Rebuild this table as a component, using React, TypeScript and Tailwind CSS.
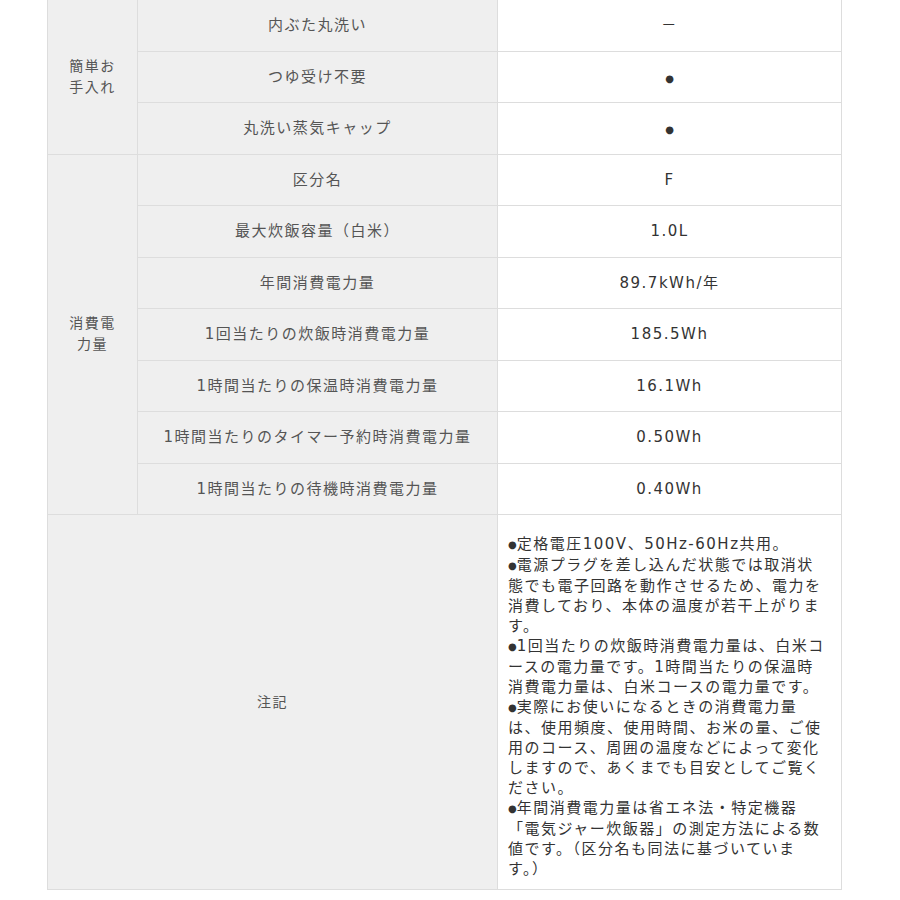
const rows: { group?: { label: string[]; span: number }; name: string; value: string }[] = [
  { group: { label: ["簡単お", "手入れ"], span: 3 }, name: "内ぶた丸洗い", value: "－" },
  { name: "つゆ受け不要", value: "●" },
  { name: "丸洗い蒸気キャップ", value: "●" },
  { group: { label: ["消費電", "力量"], span: 7 }, name: "区分名", value: "F" },
  { name: "最大炊飯容量（白米）", value: "1.0L" },
  { name: "年間消費電力量", value: "89.7kWh/年" },
  { name: "1回当たりの炊飯時消費電力量", value: "185.5Wh" },
  { name: "1時間当たりの保温時消費電力量", value: "16.1Wh" },
  { name: "1時間当たりのタイマー予約時消費電力量", value: "0.50Wh" },
  { name: "1時間当たりの待機時消費電力量", value: "0.40Wh" },
];

const notes = [
  "●定格電圧100V、50Hz-60Hz共用。",
  "●電源プラグを差し込んだ状態では取消状",
  "態でも電子回路を動作させるため、電力を",
  "消費しており、本体の温度が若干上がりま",
  "す。",
  "●1回当たりの炊飯時消費電力量は、白米コ",
  "ースの電力量です。1時間当たりの保温時",
  "消費電力量は、白米コースの電力量です。",
  "●実際にお使いになるときの消費電力量",
  "は、使用頻度、使用時間、お米の量、ご使",
  "用のコース、周囲の温度などによって変化",
  "しますので、あくまでも目安としてご覧く",
  "ださい。",
  "●年間消費電力量は省エネ法・特定機器",
  "「電気ジャー炊飯器」の測定方法による数",
  "値です。（区分名も同法に基づいていま",
  "す。）",
];

// small bullet like the original font's ●
function Line({ text }: { text: string }) {
  if (text.startsWith("●")) {
    return (
      <div className="whitespace-nowrap">
        <span className="align-[1px] text-[10px] tracking-normal">●</span>
        {text.slice(1)}
      </div>
    );
  }
  return <div className="whitespace-nowrap">{text}</div>;
}

export default function App() {
  return (
    <div
      className="min-h-[900px] bg-white pl-[47px] pt-0"
      style={{ fontFamily: '"DejaVu Sans", "Noto Sans CJK JP", sans-serif' }}
    >
      <table className="-mt-px w-[794px] table-fixed border-collapse text-[15px] tracking-[1.5px]">
        <colgroup>
          <col className="w-[90px]" />
          <col className="w-[360px]" />
          <col className="w-[344px]" />
        </colgroup>
        <tbody>
          {rows.map((r, i) => (
            <tr key={i} className="h-[51.5px]">
              {r.group && (
                <td
                  rowSpan={r.group.span}
                  className="border border-[#dddddd] bg-[#efefef] text-center align-middle text-[14px] leading-[21px] text-[#555555]"
                >
                  {r.group.label.map((l) => (
                    <div key={l}>{l}</div>
                  ))}
                </td>
              )}
              <td className="border border-[#dddddd] bg-[#efefef] text-center align-middle text-[#555555]">
                {r.name}
              </td>
              <td className="border border-[#dddddd] bg-white text-center align-middle text-[#333333]">
                {r.value === "●" ? (
                  <span className="text-[10px] tracking-normal">●</span>
                ) : (
                  r.value
                )}
              </td>
            </tr>
          ))}
          <tr>
            <td
              colSpan={2}
              className="border border-[#dddddd] bg-[#efefef] text-center align-middle text-[14px] text-[#555555]"
            >
              注記
            </td>
            <td className="border border-[#dddddd] bg-white pb-[10px] pl-[10px] pr-[2px] pt-[19px] align-top leading-[20px] text-[#333333]">
              {notes.map((n, i) => (
                <Line key={i} text={n} />
              ))}
            </td>
          </tr>
        </tbody>
      </table>
    </div>
  );
}
